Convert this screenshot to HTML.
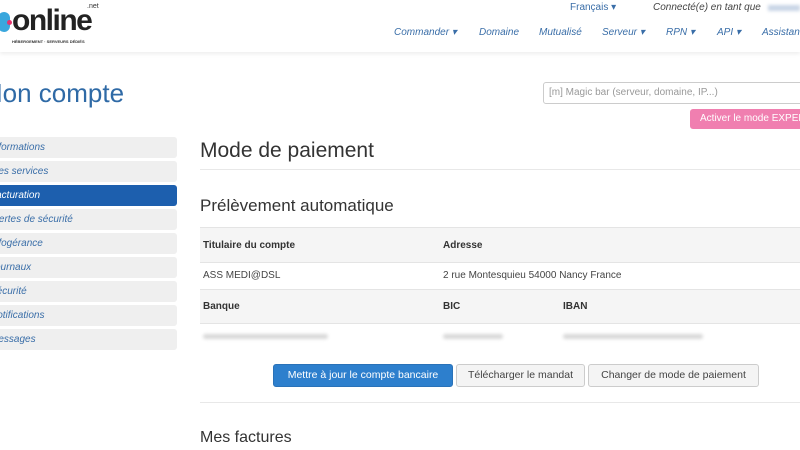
<!DOCTYPE html>
<html><head><meta charset="utf-8">
<style>
*{margin:0;padding:0;box-sizing:border-box}
html,body{width:800px;height:450px;overflow:hidden;background:#fff;font-family:"Liberation Sans",sans-serif}
.abs{position:absolute;white-space:nowrap}
.nav{color:#3a6ea8;font-style:italic;font-size:10px}
.side{position:absolute;left:-20px;width:197px;height:21px;background:#efefef;border-radius:3px;color:#3a6ea8;font-style:italic;font-size:10px;line-height:21px;padding-left:10px;overflow:hidden}
.side.a{background:#1d5fae;color:#fff}
.th{font-weight:bold;font-size:10px;color:#333}
.td{font-size:10px;color:#444}
.blur{position:absolute;height:5px;background:#d8d8d8;border-radius:3px;filter:blur(1.5px)}
.btn{position:absolute;top:364px;height:23px;font-size:10.5px;line-height:21px;text-align:center;border:1px solid #ccc;border-radius:3px;background:#f4f4f4;color:#444}
</style></head><body>
<div class="abs" style="top:0;left:0;width:800px;height:52px;background:#fff;box-shadow:0 2px 4px #eee"></div>
<div class="abs" style="left:-2px;top:12px;width:12px;height:20px;border-radius:6px;background:#3aa7dd"></div>
<div class="abs" style="left:7px;top:20px;width:5px;height:5px;border-radius:3px;background:#e4346d"></div>
<div class="abs" style="left:12px;top:4px;font-size:30px;font-weight:bold;color:#222;letter-spacing:-1.5px;line-height:34px">online</div>
<div class="abs" style="left:87px;top:3px;font-size:7px;color:#333">.net</div>
<div class="abs" style="left:12px;top:39px;font-size:4px;font-weight:bold;color:#333">HÉBERGEMENT · SERVEURS DÉDIÉS</div>
<div class="abs nav" style="left:570px;top:2px;font-style:normal">Français ▾</div>
<div class="abs nav" style="left:653px;top:2px;color:#444">Connecté(e) en tant que</div>
<div class="abs" style="left:768px;top:5px;width:32px;height:6px;background:#c9d5e6;filter:blur(1.5px)"></div>
<div class="abs nav" style="left:394px;top:27px">Commander ▾</div>
<div class="abs nav" style="left:479px;top:27px">Domaine</div>
<div class="abs nav" style="left:539px;top:27px">Mutualisé</div>
<div class="abs nav" style="left:602px;top:27px">Serveur ▾</div>
<div class="abs nav" style="left:666px;top:27px">RPN ▾</div>
<div class="abs nav" style="left:717px;top:27px">API ▾</div>
<div class="abs nav" style="left:762px;top:27px">Assistance</div>
<div class="abs" style="left:-19px;top:78px;font-size:26px;color:#2f6aa6">Mon compte</div>
<div class="abs" style="left:543px;top:82px;width:270px;height:22px;border:1px solid #ccc;border-radius:3px;font-size:10px;color:#999;line-height:20px;padding-left:5px">[m] Magic bar (serveur, domaine, IP...)</div>
<div class="abs" style="left:690px;top:109px;width:120px;height:20px;background:#f07fb0;border-radius:3px;font-size:10px;color:#fff;line-height:20px;padding-left:10px">Activer le mode EXPERT</div>
<div class="side" style="top:137px">Informations</div>
<div class="side" style="top:161px">Mes services</div>
<div class="side a" style="top:185px">Facturation</div>
<div class="side" style="top:209px">Alertes de sécurité</div>
<div class="side" style="top:233px">Infogérance</div>
<div class="side" style="top:257px">Journaux</div>
<div class="side" style="top:281px">Sécurité</div>
<div class="side" style="top:305px">Notifications</div>
<div class="side" style="top:329px">Messages</div>
<div class="abs" style="left:200px;top:139px;font-size:21px;color:#333">Mode de paiement</div>
<div class="abs" style="left:200px;top:169px;width:600px;height:1px;background:#e8e8e8"></div>
<div class="abs" style="left:200px;top:196px;font-size:17px;color:#333">Prélèvement automatique</div>
<div class="abs" style="left:200px;top:227px;width:600px;height:35px;background:#f5f5f5;border-top:1px solid #e4e4e4"></div>
<div class="abs" style="left:200px;top:262px;width:600px;height:27px;border-top:1px solid #e4e4e4"></div>
<div class="abs" style="left:200px;top:289px;width:600px;height:35px;background:#f5f5f5;border-top:1px solid #e4e4e4;border-bottom:1px solid #e4e4e4"></div>
<div class="abs th" style="left:203px;top:240px">Titulaire du compte</div>
<div class="abs th" style="left:443px;top:240px">Adresse</div>
<div class="abs td" style="left:203px;top:270px">ASS MEDI@DSL</div>
<div class="abs td" style="left:443px;top:270px">2 rue Montesquieu 54000 Nancy France</div>
<div class="abs th" style="left:203px;top:301px">Banque</div>
<div class="abs th" style="left:443px;top:301px">BIC</div>
<div class="abs th" style="left:563px;top:301px">IBAN</div>
<div class="blur" style="left:203px;top:334px;width:125px"></div>
<div class="blur" style="left:443px;top:334px;width:60px"></div>
<div class="blur" style="left:563px;top:334px;width:140px"></div>
<div class="btn" style="left:273px;width:180px;background:#2d7fcd;border-color:#2a72b8;color:#fff">Mettre à jour le compte bancaire</div>
<div class="btn" style="left:456px;width:129px">Télécharger le mandat</div>
<div class="btn" style="left:588px;width:171px">Changer de mode de paiement</div>
<div class="abs" style="left:200px;top:402px;width:600px;height:1px;background:#e8e8e8"></div>
<div class="abs" style="left:200px;top:429px;font-size:16px;color:#333">Mes factures</div>
</body></html>
